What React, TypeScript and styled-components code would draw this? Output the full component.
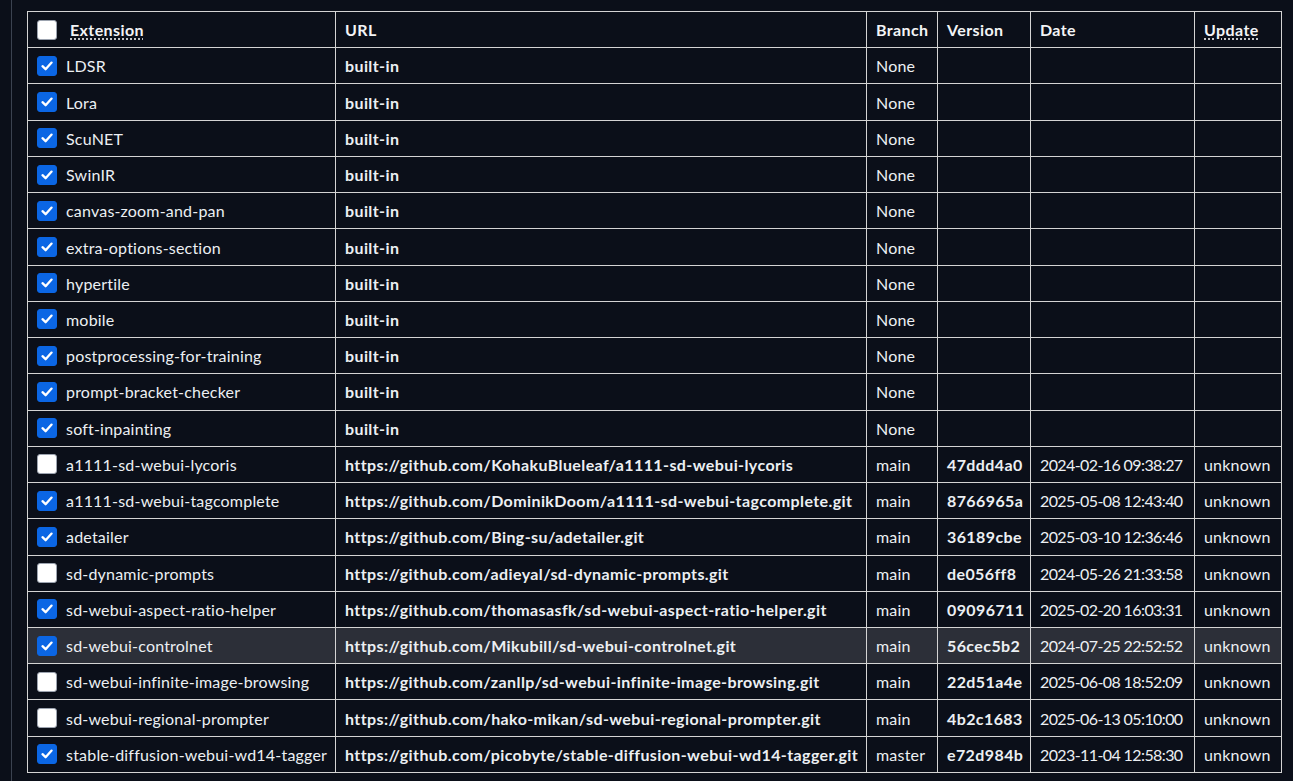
import React from "react";
import styled, { createGlobalStyle } from "styled-components";

const Global = createGlobalStyle`
  html, body { margin: 0; padding: 0; background: #0b0f19; }
  body { font-family: "Lato", "Noto Sans", sans-serif; color: #e5e7eb; }
`;

const Page = styled.div`
  height: 781px;
  overflow: hidden;
  background: #0b0f19;
  padding-left: 11px;
  box-sizing: border-box;
`;

const Panel = styled.div`
  height: 100%;
  border-left: 1px solid #3b4250;
  padding: 11px 0 0 15px;
  box-sizing: border-box;
`;

const Table = styled.table`
  border-collapse: collapse;
  width: 1254px;
  table-layout: fixed;
  font-size: 16px;
`;

const Th = styled.th<{ $w: number }>`
  width: ${(p) => p.$w}px;
  border: 1px solid #d4d4d4;
  padding: 0 9px;
  height: 36.24px;
  text-align: left;
  font-weight: 700;
  letter-spacing: 0.4px;
  color: #f3f4f6;
  white-space: nowrap;
  box-sizing: border-box;
`;

const Tr = styled.tr<{ $hl?: boolean }>`
  background: ${(p) => (p.$hl ? "#2c2f38" : "transparent")};
`;

type Kind = "text" | "bold" | "date";

const Td = styled.td<{ $kind?: Kind }>`
  border: 1px solid #d4d4d4;
  padding: 0 9px;
  height: 36.24px;
  font-weight: ${(p) => (p.$kind === "bold" ? 700 : 400)};
  letter-spacing: ${(p) => (p.$kind === "bold" ? "0.4px" : p.$kind === "date" ? "-0.6px" : "0.2px")};
  color: #eceff3;
  white-space: nowrap;
  overflow: hidden;
  box-sizing: border-box;
`;

const Abbr = styled.abbr`
  text-decoration: underline dotted;
  text-underline-offset: 3px;
  cursor: help;
`;

const ExtCell = styled.span<{ $gap: number }>`
  display: flex;
  align-items: center;
  gap: ${(p) => p.$gap}px;
`;

const Box = styled.span<{ $on: boolean }>`
  width: 20px;
  height: 20px;
  flex: none;
  border-radius: 3px;
  box-sizing: border-box;
  display: inline-flex;
  align-items: center;
  justify-content: center;
  background: ${(p) => (p.$on ? "#0b66e4" : "#ffffff")};
  border: 1px solid ${(p) => (p.$on ? "#0b66e4" : "#9ca3af")};
`;

const Check = ({ on }: { on: boolean }) => (
  <Box $on={on}>
    {on && (
      <svg width="14" height="14" viewBox="0 0 14 14">
        <path d="M2.5 7.2 L5.6 10.2 L11.6 3.6" fill="none" stroke="#fff" strokeWidth="2.3" strokeLinecap="round" strokeLinejoin="round" />
      </svg>
    )}
  </Box>
);

type Row = { name: string; on: boolean; url: string; branch: string; ver?: string; date?: string; upd?: string; hl?: boolean };

const builtins = [
  "LDSR", "Lora", "ScuNET", "SwinIR", "canvas-zoom-and-pan", "extra-options-section",
  "hypertile", "mobile", "postprocessing-for-training", "prompt-bracket-checker", "soft-inpainting",
];

const rows: Row[] = [
  ...builtins.map((n) => ({ name: n, on: true, url: "built-in", branch: "None" })),
  { name: "a1111-sd-webui-lycoris", on: false, url: "https://github.com/KohakuBlueleaf/a1111-sd-webui-lycoris", branch: "main", ver: "47ddd4a0", date: "2024-02-16 09:38:27", upd: "unknown" },
  { name: "a1111-sd-webui-tagcomplete", on: true, url: "https://github.com/DominikDoom/a1111-sd-webui-tagcomplete.git", branch: "main", ver: "8766965a", date: "2025-05-08 12:43:40", upd: "unknown" },
  { name: "adetailer", on: true, url: "https://github.com/Bing-su/adetailer.git", branch: "main", ver: "36189cbe", date: "2025-03-10 12:36:46", upd: "unknown" },
  { name: "sd-dynamic-prompts", on: false, url: "https://github.com/adieyal/sd-dynamic-prompts.git", branch: "main", ver: "de056ff8", date: "2024-05-26 21:33:58", upd: "unknown" },
  { name: "sd-webui-aspect-ratio-helper", on: true, url: "https://github.com/thomasasfk/sd-webui-aspect-ratio-helper.git", branch: "main", ver: "09096711", date: "2025-02-20 16:03:31", upd: "unknown" },
  { name: "sd-webui-controlnet", on: true, url: "https://github.com/Mikubill/sd-webui-controlnet.git", branch: "main", ver: "56cec5b2", date: "2024-07-25 22:52:52", upd: "unknown", hl: true },
  { name: "sd-webui-infinite-image-browsing", on: false, url: "https://github.com/zanllp/sd-webui-infinite-image-browsing.git", branch: "main", ver: "22d51a4e", date: "2025-06-08 18:52:09", upd: "unknown" },
  { name: "sd-webui-regional-prompter", on: false, url: "https://github.com/hako-mikan/sd-webui-regional-prompter.git", branch: "main", ver: "4b2c1683", date: "2025-06-13 05:10:00", upd: "unknown" },
  { name: "stable-diffusion-webui-wd14-tagger", on: true, url: "https://github.com/picobyte/stable-diffusion-webui-wd14-tagger.git", branch: "master", ver: "e72d984b", date: "2023-11-04 12:58:30", upd: "unknown" },
];

export default function App() {
  return (
    <Page>
      <Global />
      <Panel>
        <Table>
          <thead>
            <tr>
              <Th $w={308}>
                <ExtCell $gap={13}>
                  <Check on={false} />
                  <Abbr>Extension</Abbr>
                </ExtCell>
              </Th>
              <Th $w={531}>URL</Th>
              <Th $w={71}>Branch</Th>
              <Th $w={93}>Version</Th>
              <Th $w={164}>Date</Th>
              <Th $w={87}>
                <Abbr>Update</Abbr>
              </Th>
            </tr>
          </thead>
          <tbody>
            {rows.map((r) => (
              <Tr key={r.name} $hl={r.hl}>
                <Td>
                  <ExtCell $gap={9}>
                    <Check on={r.on} />
                    <span>{r.name}</span>
                  </ExtCell>
                </Td>
                <Td $kind="bold">{r.url}</Td>
                <Td>{r.branch}</Td>
                <Td $kind="bold">{r.ver ?? ""}</Td>
                <Td $kind="date">{r.date ?? ""}</Td>
                <Td>{r.upd ?? ""}</Td>
              </Tr>
            ))}
          </tbody>
        </Table>
      </Panel>
    </Page>
  );
}
